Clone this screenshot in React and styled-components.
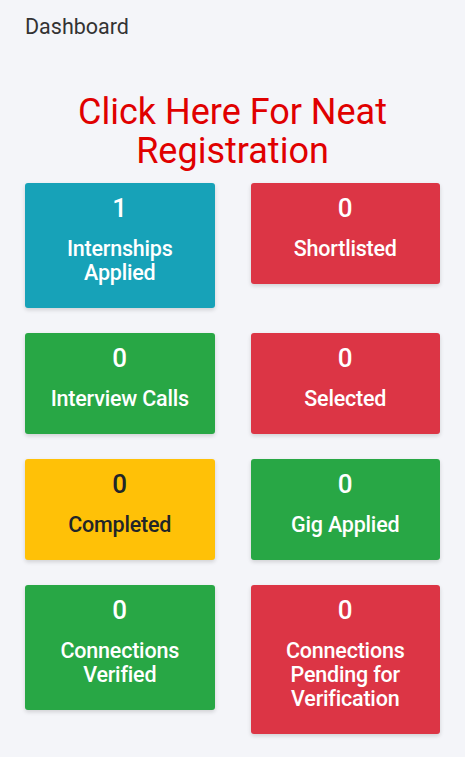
import React from "react";
import styled, { createGlobalStyle } from "styled-components";

const GlobalStyle = createGlobalStyle`
    html, body {
        margin: 0;
        padding: 0;
        background: #f4f5f9;
        font-family: Roboto, "Liberation Sans", sans-serif;
    }
`;

const Page = styled.div`
    min-height: 757px;
    padding: 14px 25px 24px;
    box-sizing: border-box;
`;

const PageTitle = styled.div`
    font-size: 21.5px;
    line-height: 26px;
    color: #333;
`;

const RegisterLink = styled.a`
    display: block;
    margin: 53px 0 12px;
    text-align: center;
    font-size: 36px;
    line-height: 39px;
    color: #e00000;
    text-decoration: none;
    cursor: pointer;
`;

const CardGrid = styled.div`
    display: grid;
    grid-template-columns: 1fr 1fr;
    column-gap: 36px;
    row-gap: 25px;
    align-items: start;
`;

const colors = {
    info: { bg: "#17a2b8", fg: "#fff" },
    danger: { bg: "#dc3545", fg: "#fff" },
    success: { bg: "#28a745", fg: "#fff" },
    warning: { bg: "#ffc107", fg: "#212529" },
};

const Card = styled.div`
    background: ${(p) => colors[p.$variant].bg};
    color: ${(p) => colors[p.$variant].fg};
    border-radius: 3px;
    box-shadow: 0 2px 4px rgba(0, 0, 0, 0.15);
    padding: 12px 6px 23px;
    text-align: center;
`;

const Count = styled.div`
    font-size: 26px;
    line-height: 26px;
    font-weight: 500;
`;

const Label = styled.div`
    margin-top: 16px;
    font-size: 21.5px;
    line-height: 24px;
    font-weight: 500;
    letter-spacing: -0.2px;
`;

const stats = [
    { count: 1, label: ["Internships", "Applied"], variant: "info" },
    { count: 0, label: ["Shortlisted"], variant: "danger" },
    { count: 0, label: ["Interview Calls"], variant: "success" },
    { count: 0, label: ["Selected"], variant: "danger" },
    { count: 0, label: ["Completed"], variant: "warning" },
    { count: 0, label: ["Gig Applied"], variant: "success" },
    { count: 0, label: ["Connections", "Verified"], variant: "success" },
    { count: 0, label: ["Connections", "Pending for", "Verification"], variant: "danger" },
];

const App = () => {
    return (
        <Page>
            <GlobalStyle />
            <PageTitle>Dashboard</PageTitle>
            <RegisterLink>
                Click Here For Neat
                <br />
                Registration
            </RegisterLink>
            <CardGrid>
                {stats.map((el, index) => (
                    <Card key={index} $variant={el.variant}>
                        <Count>{el.count}</Count>
                        <Label>
                            {el.label.map((line, i) => (
                                <div key={i}>{line}</div>
                            ))}
                        </Label>
                    </Card>
                ))}
            </CardGrid>
        </Page>
    );
};

export default App;
